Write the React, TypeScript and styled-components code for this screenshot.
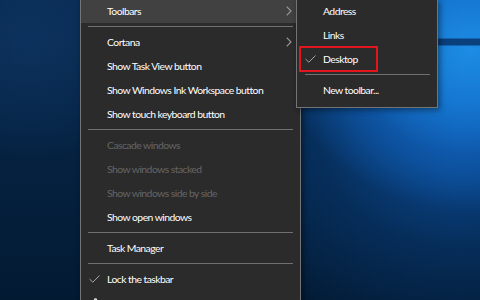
import React from "react";
import styled, { createGlobalStyle } from "styled-components";
import { Settings } from "lucide-react";

const GlobalStyle = createGlobalStyle`
  html, body {
    margin: 0;
    padding: 0;
    background: #041c38;
  }
  body {
    font-family: Lato, "Open Sans", "Liberation Sans", sans-serif;
  }
`;

const Desktop = styled.div`
  position: relative;
  width: 480px;
  height: 300px;
  overflow: hidden;
  background:
    linear-gradient(to bottom, transparent 38px, rgba(4, 40, 90, 0.75) 39px, rgba(4, 40, 90, 0.75) 45px, transparent 46px) right top / 60px 120px no-repeat,
    radial-gradient(ellipse 190px 160px at 470px 50px, #1d8ce4 0%, #1576d0 35%, rgba(16, 96, 184, 0.65) 65%, rgba(10, 70, 140, 0) 100%),
    radial-gradient(ellipse 260px 220px at 460px 130px, rgba(12, 84, 168, 0.9) 0%, rgba(8, 60, 120, 0.5) 55%, rgba(6, 40, 80, 0) 100%),
    radial-gradient(ellipse 140px 120px at 30px 40px, rgba(14, 52, 96, 0.8) 0%, rgba(8, 40, 80, 0) 100%),
    linear-gradient(to bottom, #072a52 0%, #05213f 55%, #031a33 100%);
`;

const Menu = styled.div<{ $left: number; $width: number }>`
  position: absolute;
  top: -1px;
  left: ${(p) => p.$left}px;
  width: ${(p) => p.$width}px;
  box-sizing: border-box;
  display: flex;
  flex-direction: column;
  background: #2b2b2b;
  border: 1px solid #747474;
  border-top: none;
  box-shadow: 2px 2px 6px rgba(0, 0, 0, 0.45);
  color: #ffffff;
  font-size: 10.4px;
  letter-spacing: -0.55px;
`;

const MainMenu = styled(Menu)`
  height: 320px;
  border-bottom: none;
`;

const SubMenu = styled(Menu)`
  padding-bottom: 5px;
  z-index: 2;
`;

const Item = styled.div<{ $active?: boolean; $disabled?: boolean }>`
  display: flex;
  align-items: center;
  height: 24px;
  flex-shrink: 0;
  padding-right: 8px;
  background: ${(p) => (p.$active ? "#414141" : "transparent")};
  color: ${(p) => (p.$disabled ? "#666666" : "#ffffff")};
  white-space: nowrap;
`;

const MarkCell = styled.span<{ $width: number; $pad: number; $bright?: boolean }>`
  width: ${(p) => p.$width}px;
  flex-shrink: 0;
  box-sizing: border-box;
  padding-left: ${(p) => p.$pad}px;
  display: flex;
  align-items: center;
  color: ${(p) => (p.$bright ? "#f0f0f0" : "#a8a8a8")};
`;

const Arrow = styled.span`
  margin-left: auto;
  display: flex;
  align-items: center;
  color: #9a9a9a;
`;

const Separator = styled.div<{ $inset: number; $right: number }>`
  height: 7px;
  flex-shrink: 0;
  display: flex;
  align-items: center;
  padding: 0 ${(p) => p.$right}px 0 ${(p) => p.$inset}px;

  &::after {
    content: "";
    flex: 1;
    height: 1px;
    background: #707070;
  }
`;

const Annotation = styled.div`
  position: absolute;
  left: 299px;
  top: 46px;
  width: 79px;
  height: 26px;
  box-sizing: border-box;
  border: 2px solid #e3161e;
  z-index: 3;
`;

const Check = () => (
  <svg width="11" height="8" viewBox="0 0 11 8" fill="none">
    <polyline points="0.5,4 3.8,7.2 10.5,0.6" stroke="currentColor" strokeWidth="1" />
  </svg>
);

const Chevron = () => (
  <svg width="6" height="10" viewBox="0 0 6 10" fill="none">
    <polyline points="0.7,0.7 5,5 0.7,9.3" stroke="currentColor" strokeWidth="1.1" />
  </svg>
);

type Entry =
  | { kind: "sep" }
  | { kind: "item"; label: string; active?: boolean; disabled?: boolean; sub?: boolean; checked?: boolean; gear?: boolean };

const mainEntries: Entry[] = [
  { kind: "item", label: "Toolbars", active: true, sub: true },
  { kind: "sep" },
  { kind: "item", label: "Cortana", sub: true },
  { kind: "item", label: "Show Task View button" },
  { kind: "item", label: "Show Windows Ink Workspace button" },
  { kind: "item", label: "Show touch keyboard button" },
  { kind: "sep" },
  { kind: "item", label: "Cascade windows", disabled: true },
  { kind: "item", label: "Show windows stacked", disabled: true },
  { kind: "item", label: "Show windows side by side", disabled: true },
  { kind: "item", label: "Show open windows" },
  { kind: "sep" },
  { kind: "item", label: "Task Manager" },
  { kind: "sep" },
  { kind: "item", label: "Lock the taskbar", checked: true },
  { kind: "item", label: "Settings", gear: true },
];

const subEntries: Entry[] = [
  { kind: "item", label: "Address" },
  { kind: "item", label: "Links" },
  { kind: "item", label: "Desktop", checked: true },
  { kind: "sep" },
  { kind: "item", label: "New toolbar..." },
];

const renderEntries = (entries: Entry[], sepInset: number, sepRight: number) =>
  entries.map((e, i) =>
    e.kind === "sep" ? (
      <Separator key={i} $inset={sepInset} $right={sepRight} />
    ) : (
      <Item key={i} $active={e.active} $disabled={e.disabled}>
        <MarkCell $width={26} $pad={e.gear ? 9 : 8} $bright={e.gear}>
          {e.checked && <Check />}
          {e.gear && <Settings size={11} strokeWidth={2.4} />}
        </MarkCell>
        {e.label}
        {e.sub && (
          <Arrow>
            <Chevron />
          </Arrow>
        )}
      </Item>
    )
  );

export default function App() {
  return (
    <>
      <GlobalStyle />
      <Desktop>
        <MainMenu $left={80} $width={221}>
          {renderEntries(mainEntries, 7, 7)}
        </MainMenu>
        <SubMenu $left={296} $width={142}>
          {renderEntries(subEntries, 8, 7)}
        </SubMenu>
        <Annotation />
      </Desktop>
    </>
  );
}
